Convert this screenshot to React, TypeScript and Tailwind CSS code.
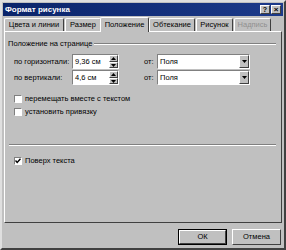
import React from 'react';

const raised = 'border border-t-white border-l-white border-r-[#404040] border-b-[#404040]';
const sunken = 'border border-t-[#808080] border-l-[#808080] border-r-white border-b-white';

const Check: React.FC<{ label: React.ReactNode; checked?: boolean }> = ({ label, checked }) => (
  <div className="flex items-center gap-[3px] h-[13px]">
    <div className={`w-[8px] h-[8px] bg-white ${sunken} flex items-center justify-center`}>
      {checked && (
        <svg width="6" height="6" viewBox="0 0 6 6">
          <path d="M0.5 2.5 L2.2 4.5 L5.5 0.8" stroke="#000" strokeWidth="1.4" fill="none" />
        </svg>
      )}
    </div>
    <span className="whitespace-nowrap">{label}</span>
  </div>
);

const Spin: React.FC<{ value: string }> = ({ value }) => (
  <div className={`w-[47px] h-[15px] bg-white ${sunken} flex items-stretch`}>
    <span className="flex-1 pl-[2px] leading-[13px] whitespace-nowrap">{value}</span>
    <div className="w-[9px] flex flex-col bg-[#c0c0c0]">
      <div className={`flex-1 ${raised} flex items-center justify-center`}>
        <svg width="5" height="3" viewBox="0 0 5 3"><path d="M0 3 L2.5 0 L5 3Z" fill="#000" /></svg>
      </div>
      <div className={`flex-1 ${raised} flex items-center justify-center`}>
        <svg width="5" height="3" viewBox="0 0 5 3"><path d="M0 0 L2.5 3 L5 0Z" fill="#000" /></svg>
      </div>
    </div>
  </div>
);

const Select: React.FC<{ value: string }> = ({ value }) => (
  <div className={`w-[93px] h-[15px] bg-white ${sunken} flex items-stretch`}>
    <span className="flex-1 pl-[2px] leading-[13px]">{value}</span>
    <div className={`w-[10px] bg-[#c0c0c0] ${raised} flex items-center justify-center`}>
      <svg width="5" height="3" viewBox="0 0 5 3"><path d="M0 0 L2.5 3 L5 0Z" fill="#000" /></svg>
    </div>
  </div>
);

const tabs = [
  { t: 'Цвета и линии', w: 'w-[60px]' },
  { t: 'Размер', w: 'w-[36px]' },
  { t: 'Положение', w: 'w-[49px]' },
  { t: 'Обтекание', w: 'w-[46px]' },
  { t: 'Рисунок', w: 'w-[37px]' },
  { t: 'Надпись', w: 'w-[37px]' },
];

export default function App() {
  return (
    <div
      className="w-[286px] h-[250px] bg-[#c0c0c0] text-[7.5px] text-black flex flex-col border-2 border-t-[#dfdfdf] border-l-[#dfdfdf] border-r-[#404040] border-b-[#404040] overflow-hidden"
      style={{ fontFamily: '"Liberation Sans", Arial, sans-serif' }}
    >
      {/* Title bar */}
      <div className="h-[13px] mx-[1px] mt-[1px] bg-gradient-to-r from-[#0a246a] to-[#1c3a8a] flex items-center justify-between pl-[2px] pr-[2px] shrink-0">
        <span className="text-white font-bold text-[8px]">Формат рисунка</span>
        <div className="flex gap-[1px]">
          <div className={`w-[10px] h-[9px] bg-[#c0c0c0] ${raised} flex items-center justify-center font-bold text-[7px] leading-none`}>?</div>
          <div className={`w-[10px] h-[9px] bg-[#c0c0c0] ${raised} flex items-center justify-center font-bold text-[8px] leading-none`}>×</div>
        </div>
      </div>

      {/* Tabs */}
      <div className="flex items-end h-[15px] pl-[1px] shrink-0">
        {tabs.map(({ t, w }, i) => {
          const active = i === 2;
          return (
            <div
              key={t}
              className={`${w} whitespace-nowrap justify-center border-t border-l border-r border-t-white border-l-white border-r-[#404040] rounded-t-[2px] flex items-center ${
                active ? 'h-[15px] -mb-[1px] -mx-[1px] bg-[#c0c0c0] relative z-10' : 'h-[13px] ml-[1px]'
              } ${i === 5 ? 'text-[#909090]' : ''}`}
            >
              {t}
            </div>
          );
        })}
      </div>

      {/* Panel */}
      <div className={`mx-[2px] h-[192px] shrink-0 ${raised} flex flex-col pl-[3px] pr-[5px] pt-[6px]`}>
        <div className="flex items-center gap-[2px]">
          <span className="whitespace-nowrap">Положение на странице</span>
          <div className="flex-1 h-[2px] border-t border-t-[#808080] border-b border-b-white" />
        </div>
        <div className="pl-[6px] pt-[5px] flex flex-col gap-[1px]">
          <div className="flex items-center">
            <span className="w-[58px] whitespace-nowrap">по горизонтали:</span>
            <Spin value="9,36 см" />
            <span className="ml-[25px] w-[13px]">от:</span>
            <Select value="Поля" />
          </div>
          <div className="flex items-center">
            <span className="w-[58px] whitespace-nowrap">по вертикали:</span>
            <Spin value="4,6 см" />
            <span className="ml-[25px] w-[13px]">от:</span>
            <Select value="Поля" />
          </div>
          <div className="pt-[6px] flex flex-col gap-0">
            <Check label="перемещать вместе с текстом" />
            <Check label="установить привязку" />
          </div>
        </div>
        <div className="mt-[26px] ml-[1px] h-[2px] border-t border-t-[#808080] border-b border-b-white" />
        <div className="pl-[6px] pt-[8px]">
          <Check label="Поверх текста" checked />
        </div>
      </div>

      {/* Buttons */}
      <div className="flex justify-end gap-[5px] pr-[3px] pt-[6px]">
        <div className="w-[49px] h-[16px] border border-black flex">
          <div className={`flex-1 ${raised} flex items-center justify-center`}>ОК</div>
        </div>
        <div className={`w-[49px] h-[16px] ${raised} flex items-center justify-center`}>Отмена</div>
      </div>
    </div>
  );
}
